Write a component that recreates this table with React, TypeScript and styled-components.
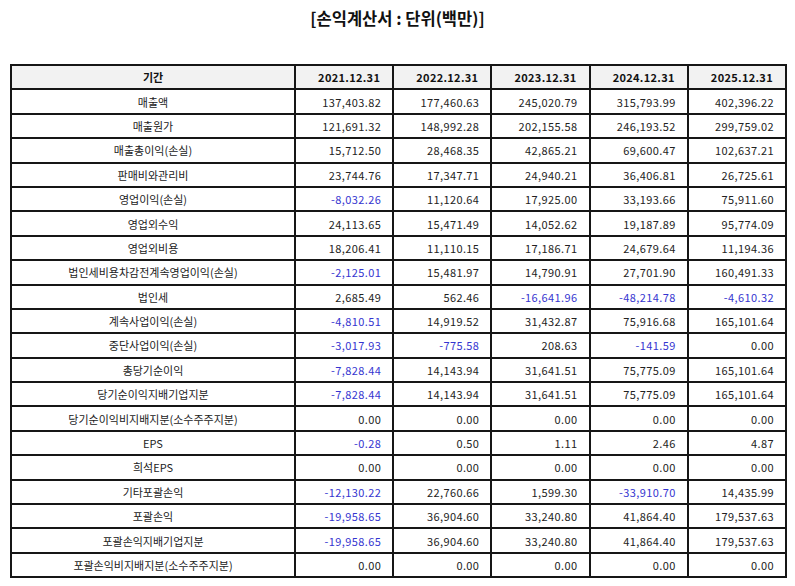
import React from "react";
import styled, { createGlobalStyle } from "styled-components";

const Global = createGlobalStyle`
  html, body { margin: 0; padding: 0; background: #fff; }
  body { font-family: "Noto Sans CJK KR", "Noto Sans", sans-serif; color: #111; }
`;

const Page = styled.div`
  width: 795px;
  padding: 0 10px;
  box-sizing: border-box;
`;

const Title = styled.h1`
  margin: 0;
  height: 64px;
  padding-top: 6px;
  box-sizing: border-box;
  font-size: 16.5px;
  font-weight: 700;
  text-align: center;
  line-height: 24px;
  color: #111;
`;

const Table = styled.table`
  width: 775px;
  border-collapse: collapse;
  table-layout: fixed;
  font-size: 11px;
`;

const Th = styled.th<{ $label?: boolean }>`
  height: 22.4px;
  padding: 0 12px;
  border: 2px solid #161616;
  background: #f2f2f2;
  font-weight: 700;
  letter-spacing: ${(p) => (p.$label ? "0" : "0.3px")};
  text-align: ${(p) => (p.$label ? "center" : "right")};
  color: #111;
`;

const Label = styled.td`
  height: 22.4px;
  padding: 0 6px;
  border: 2px solid #161616;
  text-align: center;
  color: #222;
`;

const Num = styled.td<{ $neg?: boolean }>`
  height: 22.4px;
  padding: 0 11px 0 4px;
  border: 2px solid #161616;
  text-align: right;
  letter-spacing: 0.4px;
  color: ${(p) => (p.$neg ? "#3535d0" : "#222")};
`;

const years = ["2021.12.31", "2022.12.31", "2023.12.31", "2024.12.31", "2025.12.31"];
const z = ["0.00", "0.00", "0.00", "0.00", "0.00"];

const rows: [string, string[]][] = [
  ["매출액", ["137,403.82", "177,460.63", "245,020.79", "315,793.99", "402,396.22"]],
  ["매출원가", ["121,691.32", "148,992.28", "202,155.58", "246,193.52", "299,759.02"]],
  ["매출총이익(손실)", ["15,712.50", "28,468.35", "42,865.21", "69,600.47", "102,637.21"]],
  ["판매비와관리비", ["23,744.76", "17,347.71", "24,940.21", "36,406.81", "26,725.61"]],
  ["영업이익(손실)", ["-8,032.26", "11,120.64", "17,925.00", "33,193.66", "75,911.60"]],
  ["영업외수익", ["24,113.65", "15,471.49", "14,052.62", "19,187.89", "95,774.09"]],
  ["영업외비용", ["18,206.41", "11,110.15", "17,186.71", "24,679.64", "11,194.36"]],
  ["법인세비용차감전계속영업이익(손실)", ["-2,125.01", "15,481.97", "14,790.91", "27,701.90", "160,491.33"]],
  ["법인세", ["2,685.49", "562.46", "-16,641.96", "-48,214.78", "-4,610.32"]],
  ["계속사업이익(손실)", ["-4,810.51", "14,919.52", "31,432.87", "75,916.68", "165,101.64"]],
  ["중단사업이익(손실)", ["-3,017.93", "-775.58", "208.63", "-141.59", "0.00"]],
  ["총당기순이익", ["-7,828.44", "14,143.94", "31,641.51", "75,775.09", "165,101.64"]],
  ["당기순이익지배기업지분", ["-7,828.44", "14,143.94", "31,641.51", "75,775.09", "165,101.64"]],
  ["당기순이익비지배지분(소수주주지분)", z],
  ["EPS", ["-0.28", "0.50", "1.11", "2.46", "4.87"]],
  ["희석EPS", z],
  ["기타포괄손익", ["-12,130.22", "22,760.66", "1,599.30", "-33,910.70", "14,435.99"]],
  ["포괄손익", ["-19,958.65", "36,904.60", "33,240.80", "41,864.40", "179,537.63"]],
  ["포괄손익지배기업지분", ["-19,958.65", "36,904.60", "33,240.80", "41,864.40", "179,537.63"]],
  ["포괄손익비지배지분(소수주주지분)", z],
];

export default function App() {
  return (
    <Page>
      <Global />
      <Title>[손익계산서 : 단위(백만)]</Title>
      <Table>
        <colgroup>
          <col style={{ width: 284 }} />
          {years.map((y) => (
            <col key={y} style={{ width: 98.2 }} />
          ))}
        </colgroup>
        <thead>
          <tr>
            <Th $label>기간</Th>
            {years.map((y) => (
              <Th key={y}>{y}</Th>
            ))}
          </tr>
        </thead>
        <tbody>
          {rows.map(([label, vals]) => (
            <tr key={label}>
              <Label>{label}</Label>
              {vals.map((v, i) => (
                <Num key={i} $neg={v.startsWith("-")}>
                  {v}
                </Num>
              ))}
            </tr>
          ))}
        </tbody>
      </Table>
    </Page>
  );
}
